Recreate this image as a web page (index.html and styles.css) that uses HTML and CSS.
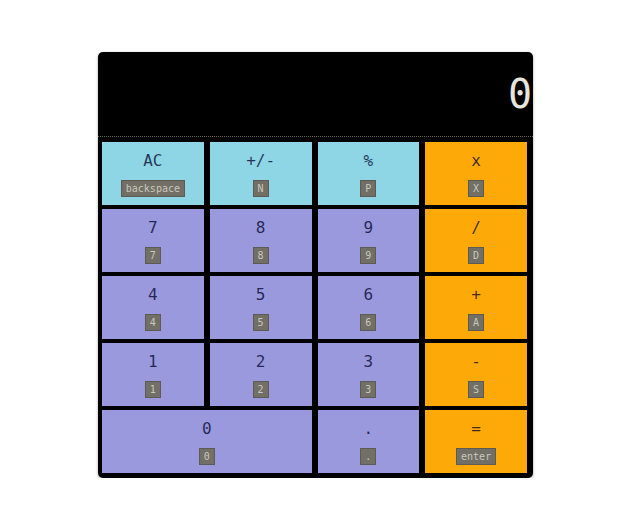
FILE: index.html
```html
<!DOCTYPE html>
<html lang="en">
<head>
  <meta charset="UTF-8">
  <title>Calculator</title>
  <link rel="stylesheet" href="styles.css">
</head>
<body>
  <div class="calculator">
    <div class="display">0</div>
    <div class="keys">
      <button class="key func"><span class="label">AC</span><span class="hint">backspace</span></button>
      <button class="key func"><span class="label">+/-</span><span class="hint">N</span></button>
      <button class="key func"><span class="label">%</span><span class="hint">P</span></button>
      <button class="key op"><span class="label">x</span><span class="hint">X</span></button>

      <button class="key num"><span class="label">7</span><span class="hint">7</span></button>
      <button class="key num"><span class="label">8</span><span class="hint">8</span></button>
      <button class="key num"><span class="label">9</span><span class="hint">9</span></button>
      <button class="key op"><span class="label">/</span><span class="hint">D</span></button>

      <button class="key num"><span class="label">4</span><span class="hint">4</span></button>
      <button class="key num"><span class="label">5</span><span class="hint">5</span></button>
      <button class="key num"><span class="label">6</span><span class="hint">6</span></button>
      <button class="key op"><span class="label">+</span><span class="hint">A</span></button>

      <button class="key num"><span class="label">1</span><span class="hint">1</span></button>
      <button class="key num"><span class="label">2</span><span class="hint">2</span></button>
      <button class="key num"><span class="label">3</span><span class="hint">3</span></button>
      <button class="key op"><span class="label">-</span><span class="hint">S</span></button>

      <button class="key num wide"><span class="label">0</span><span class="hint">0</span></button>
      <button class="key num"><span class="label">.</span><span class="hint">.</span></button>
      <button class="key op"><span class="label">=</span><span class="hint">enter</span></button>
    </div>
  </div>
</body>
</html>
```

FILE: styles.css
```css
body {
  margin: 0;
  padding: 52px 0 0 98px;
  background: #fff;
  font-family: "DejaVu Sans Mono", monospace;
}
.calculator {
  width: 435px;
  background: #000;
  border-radius: 5px;
  box-shadow: 0 1px 3px rgba(0,0,0,0.35);
  overflow: hidden;
}
.display {
  height: 84px;
  border-bottom: 1px dotted #6a6a50;
  display: flex;
  align-items: center;
  justify-content: flex-end;
  color: #e6e6dc;
  font-size: 40px;
  padding-right: 1px;
}
.keys {
  display: grid;
  grid-template-columns: repeat(4, 1fr);
  grid-auto-rows: 63px;
  gap: 4px 6px;
  padding: 5px 6px 5px 4px;
}
.key {
  border: none;
  margin: 0;
  padding: 0;
  display: flex;
  flex-direction: column;
  align-items: center;
  justify-content: center;
  gap: 9px;
  font-family: inherit;
  color: rgba(0, 0, 40, 0.75);
}
.key.wide {
  grid-column: span 2;
}
.func {
  background: #8ed5e6;
}
.num {
  background: #9a99de;
}
.op {
  background: #fdaa08;
}
.label {
  font-size: 16px;
  line-height: 20px;
}
.hint {
  background: #716f66;
  border: 1px solid #5c5a52;
  color: #cac8bc;
  font-size: 10px;
  line-height: 13px;
  padding: 1px 4px;
  min-width: 6px;
}
```
